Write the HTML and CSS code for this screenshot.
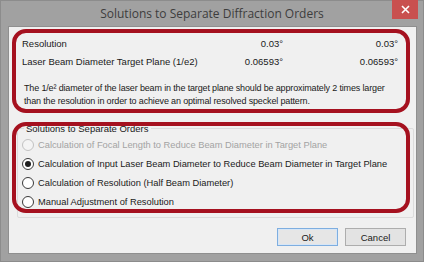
FILE: index.html
```html
<!DOCTYPE html>
<html lang="en">
<head>
  <meta charset="UTF-8">
  <title>Solutions to Separate Diffraction Orders</title>
  <link rel="stylesheet" href="styles.css">
</head>
<body>

<div class="window">
  <!-- Title bar -->
  <div class="titlebar">
    <div class="title">Solutions to Separate Diffraction Orders</div>
    <div class="close">
      <svg width="9" height="9" viewBox="0 0 9 9">
        <path d="M1 1 L8 8 M8 1 L1 8" stroke="#fff" stroke-width="1.6" fill="none"/>
      </svg>
    </div>
  </div>

  <div class="client">
    <!-- Values and hint -->
    <div class="info">
      <div class="info-row">
        <span class="info-label">Resolution</span>
        <span class="info-value">0.03°</span>
        <span class="info-value">0.03°</span>
      </div>
      <div class="info-row">
        <span class="info-label">Laser Beam Diameter Target Plane (1/e2)</span>
        <span class="info-value">0.06593°</span>
        <span class="info-value">0.06593°</span>
      </div>
      <p class="info-note">
        The 1/e² diameter of the laser beam in the target plane should be approximately 2 times larger
        than the resolution in order to achieve an optimal resolved speckel pattern.
      </p>
    </div>

    <!-- Options group -->
    <div class="group">
      <div class="group-title">Solutions to Separate Orders</div>
      <div class="radio disabled"><span class="dot"></span>Calculation of Focal Length to Reduce Beam Diameter in Target Plane</div>
      <div class="radio checked"><span class="dot"></span>Calculation of Input Laser Beam Diameter to Reduce Beam Diameter in Target Plane</div>
      <div class="radio"><span class="dot"></span>Calculation of Resolution (Half Beam Diameter)</div>
      <div class="radio"><span class="dot"></span>Manual Adjustment of Resolution</div>
      <span class="mark"></span>
    </div>

    <div class="buttons">
      <button class="btn btn-default" type="button">Ok</button>
      <button class="btn" type="button">Cancel</button>
    </div>
  </div>
</div>

</body>
</html>
```

FILE: styles.css
```css
* {
  box-sizing: border-box;
  margin: 0;
  padding: 0;
}
html, body {
  width: 424px;
  height: 262px;
  overflow: hidden;
  background: #a0a0a0;
  font-family: 'Liberation Sans', Arial, sans-serif;
  font-size: 9.5px;
  color: #1a1a1a;
}

/* Window frame */
.window {
  height: 262px;
  display: flex;
  flex-direction: column;
  background: #a1a1a1;
  border: 1px solid #8c8c8c;
}

.titlebar {
  height: 25px;
  display: grid;
  grid-template-columns: 1fr auto 1fr;
  align-items: start;
}
.title {
  grid-column: 2;
  font-family: 'Open Sans', sans-serif;
  font-size: 12px;
  line-height: 25px;
  color: #3d3d3d;
}
.close {
  grid-column: 3;
  justify-self: end;
  width: 26px;
  height: 19px;
  margin-right: 5px;
  margin-top: -1px;
  background: #c9504f;
  display: flex;
  align-items: center;
  justify-content: center;
}

/* Client area */
.client {
  flex: 1;
  margin: 0 6px 7px 7px;
  background: #f0f0f0;
  border: 1px solid #8f8f8f;
  display: flex;
  flex-direction: column;
}

/* Values box (red annotation ring) */
.info {
  margin: 2px 6px 0 3px;
  border: 4px solid #a5111f;
  border-radius: 14px;
  padding: 1px 8px 1px 6px;
}
.info-row {
  display: grid;
  grid-template-columns: 1fr 80px 115px;
  height: 18px;
  align-items: center;
  white-space: nowrap;
}
.info-value {
  text-align: right;
}
.info-note {
  margin-top: 12px;
  padding-left: 2px;
  font-size: 9px;
  line-height: 13px;
  letter-spacing: -0.15px;
}

/* Group box */
.group {
  position: relative;
  margin: 15px 2px 0 8px;
  border: 1px solid #dcdcdc;
  border-radius: 2px;
  padding: 0 0 6px 4px;
}
.group-title {
  width: fit-content;
  margin: -7px 0 0 2px;
  padding: 0 2px;
  background: #f0f0f0;
  line-height: 13px;
}
.radio {
  height: 19px;
  display: flex;
  align-items: center;
  white-space: nowrap;
  font-size: 9.3px;
}
.radio .dot {
  width: 12px;
  height: 12px;
  margin-right: 4px;
  border: 1px solid #3a3a3a;
  border-radius: 50%;
  background: #fff;
  display: flex;
  align-items: center;
  justify-content: center;
}
.radio.checked .dot::after {
  content: "";
  width: 6px;
  height: 6px;
  border-radius: 50%;
  background: #1f1f1f;
}
.radio.disabled {
  color: #a3a3a3;
}
.radio.disabled .dot {
  border-color: #c2c2c2;
  background: #f4f4f4;
}

/* Red annotation ring over the group */
.mark {
  position: absolute;
  top: -7px;
  left: -6px;
  right: 3px;
  bottom: 4px;
  border: 4px solid #a5111f;
  border-radius: 14px;
  pointer-events: none;
}

/* Dialog buttons */
.buttons {
  display: flex;
  justify-content: flex-end;
  gap: 7px;
  margin-top: 10px;
  padding-right: 10px;
}
.btn {
  width: 61px;
  height: 18px;
  font-family: inherit;
  font-size: 9.5px;
  color: #1a1a1a;
  background: #e3e3e3;
  border: 1px solid #adadad;
}
.btn-default {
  background: #e6e6e6;
  border-color: #7eaee0;
  box-shadow: inset 0 0 0 1px #d7e6f6;
}
```
